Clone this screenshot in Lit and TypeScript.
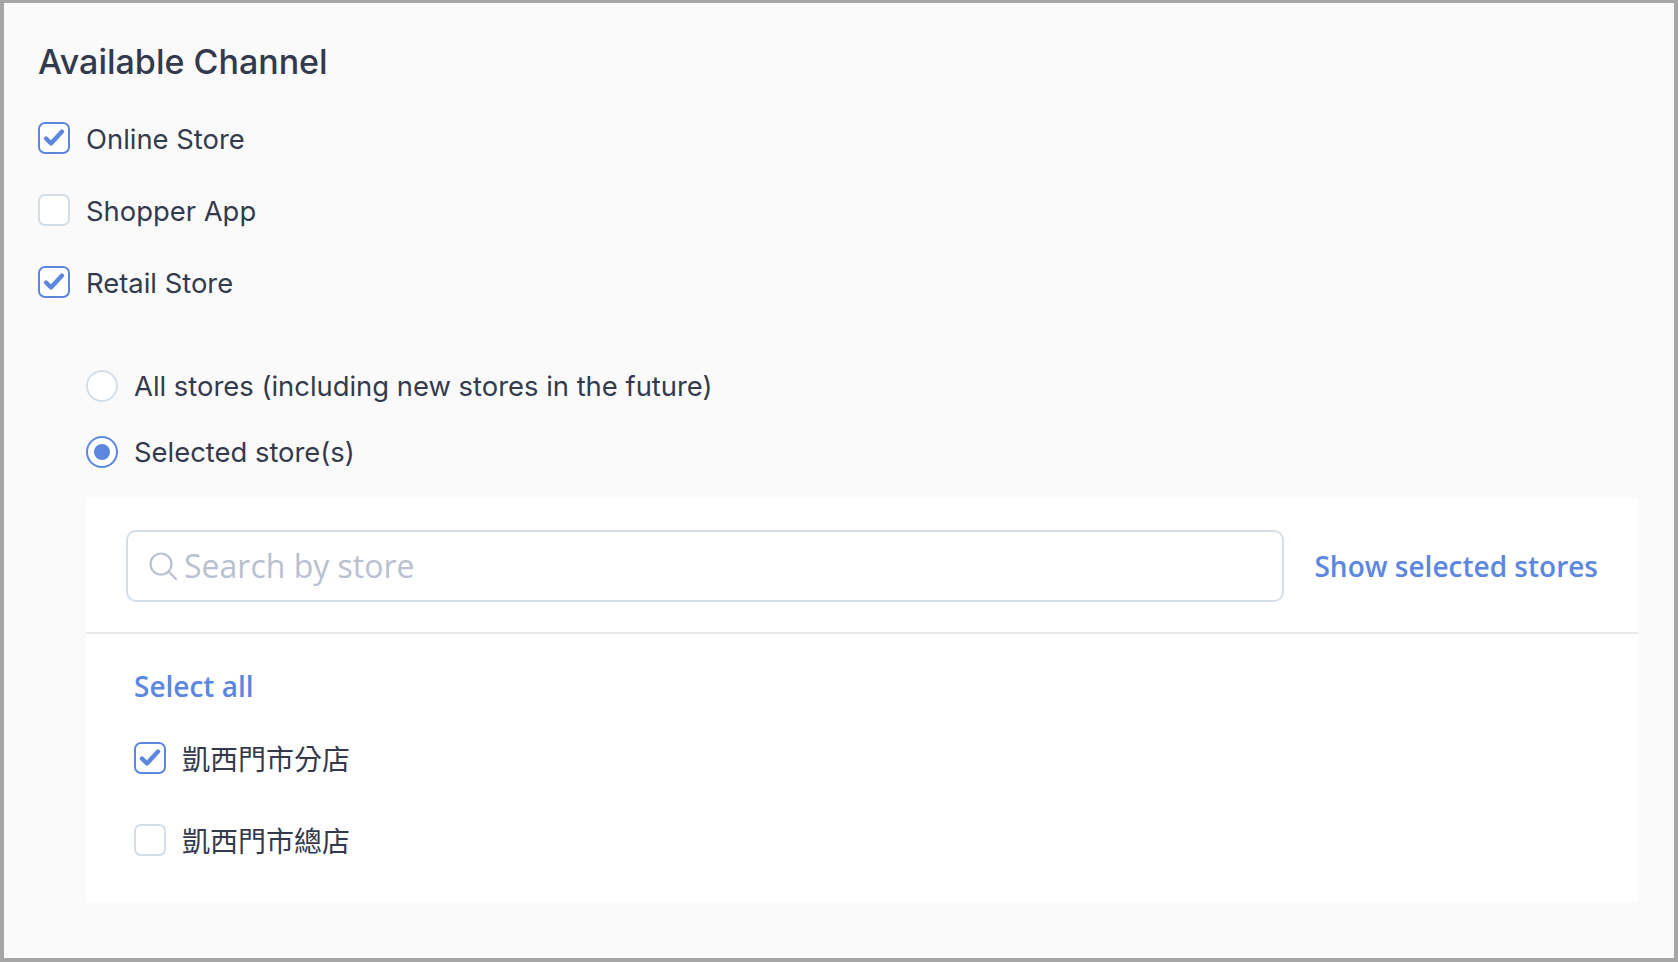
import { LitElement, html, css, svg } from "lit";
import { customElement } from "lit/decorators.js";

const check = svg`<svg class="tick" viewBox="0 0 32 32" width="32" height="32" fill="none"><path d="M8 16.5 L13 21.5 L24 9.5" stroke="#5c87e0" stroke-width="4.4" stroke-linecap="round" stroke-linejoin="round"/></svg>`;

@customElement("app-root")
export class AppRoot extends LitElement {
  static styles = css`
    :host {
      display: block;
      box-sizing: border-box;
      width: 1678px;
      height: 962px;
      border-style: solid;
      border-color: #a6a6a6;
      border-width: 3px 4px 4px 4px;
      background: #fafafa;
      color: #333a4d;
      font-family: Inter, "Noto Sans CJK TC", sans-serif;
      font-size: 27.4px;
      overflow: hidden;
    }
    .content { padding: 36px 36px 0 34px; }
    h2 {
      margin: 0;
      height: 46px;
      line-height: 46px;
      font-size: 34px;
      font-weight: 500;
    }
    .channels { display: flex; flex-direction: column; gap: 40px; margin-top: 37px; }
    .row { display: flex; align-items: center; height: 32px; gap: 16px; line-height: 32px; white-space: nowrap; }
    .channels .row span:last-child { padding-top: 2px; }
    .box {
      position: relative;
      box-sizing: border-box;
      width: 32px;
      height: 32px;
      flex: none;
      border: 2px solid #d4dee9;
      border-radius: 7px;
      background: #fff;
    }
    .box.on { border-color: #5c87e0; }
    .tick { position: absolute; left: -2px; top: -2px; }
    .stores { margin-left: 48px; margin-top: 72px; }
    .radios { display: flex; flex-direction: column; gap: 34px; }
    .radio {
      box-sizing: border-box;
      width: 32px;
      height: 32px;
      flex: none;
      border: 2px solid #d4dee9;
      border-radius: 50%;
      background: #fff;
      display: flex;
      align-items: center;
      justify-content: center;
    }
    .radio.on { border-color: #5c87e0; }
    .radio.on i { display: block; width: 16px; height: 16px; border-radius: 50%; background: #5c87e0; }
    .panel { margin-top: 30px; background: #fff; height: 404px; }
    .search {
      display: flex;
      align-items: center;
      padding: 32px 40px 30px 40px;
      gap: 30px;
      border-bottom: 2px solid #e6e8ec;
    }
    .input {
      box-sizing: border-box;
      flex: 1;
      height: 72px;
      display: flex;
      align-items: center;
      gap: 6px;
      padding-left: 20px;
      border: 2px solid #d4dee9;
      border-radius: 10px;
      background: #fff;
      color: #b9c0cf;
      font-family: "Open Sans", sans-serif;
      font-size: 32px;
    }
    .input span { padding-bottom: 2px; }
    .link {
      font-family: "Open Sans", sans-serif;
      font-weight: 600;
      font-size: 28px;
      color: #5c87e0;
      white-space: nowrap;
    }
    .list { padding: 34px 48px 0; }
    .list .link { display: block; height: 37px; line-height: 37px; }
    .items { display: flex; flex-direction: column; gap: 50px; margin-top: 37px; }
    .cjk { font-size: 28px; font-family: "Noto Sans CJK TC", sans-serif; }
  `;

  private box(on: boolean) {
    return html`<span class="box ${on ? "on" : ""}">${on ? check : ""}</span>`;
  }

  render() {
    return html`<div class="content">
      <h2>Available Channel</h2>
      <div class="channels">
        <div class="row">${this.box(true)}<span>Online Store</span></div>
        <div class="row">${this.box(false)}<span>Shopper App</span></div>
        <div class="row">${this.box(true)}<span>Retail Store</span></div>
      </div>
      <div class="stores">
        <div class="radios">
          <div class="row"><span class="radio"></span><span>All stores (including new stores in the future)</span></div>
          <div class="row"><span class="radio on"><i></i></span><span>Selected store(s)</span></div>
        </div>
        <div class="panel">
          <div class="search">
            <div class="input">
              <svg width="30" height="30" viewBox="0 0 30 30" fill="none" stroke="#b9c0cf" stroke-width="2.2" stroke-linecap="round"><circle cx="13" cy="13" r="10.5"/><path d="M21 21 L28 28"/></svg>
              <span>Search by store</span>
            </div>
            <span class="link">Show selected stores</span>
          </div>
          <div class="list">
            <span class="link">Select all</span>
            <div class="items">
              <div class="row cjk">${this.box(true)}<span lang="zh-TW">凱西門市分店</span></div>
              <div class="row cjk">${this.box(false)}<span lang="zh-TW">凱西門市總店</span></div>
            </div>
          </div>
        </div>
      </div>
    </div>`;
  }
}
